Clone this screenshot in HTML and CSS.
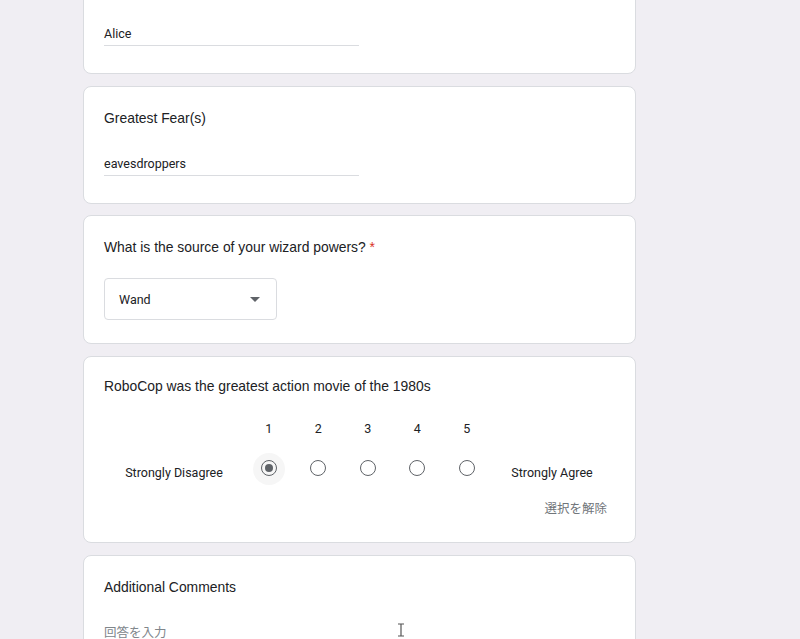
FILE: index.html
```html
<!DOCTYPE html>
<html lang="ja">
<head>
    <meta charset="UTF-8">
    <meta name="viewport" content="width=device-width, initial-scale=1.0">
    <title>Wizard Survey</title>
    <link rel="stylesheet" href="styles.css">
</head>
<body>
    <div class="form">
        <div class="card">
            <div class="question">Name</div>
            <div class="answer">Alice</div>
        </div>

        <div class="card">
            <div class="question">Greatest Fear(s)</div>
            <div class="answer">eavesdroppers</div>
        </div>

        <div class="card card-select">
            <div class="question">What is the source of your wizard powers? <span class="required">*</span></div>
            <div class="dropdown">
                <span>Wand</span>
                <span class="arrow"></span>
            </div>
        </div>

        <div class="card card-scale">
            <div class="question">RoboCop was the greatest action movie of the 1980s</div>
            <div class="scale">
                <div class="scale-num n1">1</div>
                <div class="scale-num n2">2</div>
                <div class="scale-num n3">3</div>
                <div class="scale-num n4">4</div>
                <div class="scale-num n5">5</div>
                <div class="scale-label">Strongly Disagree</div>
                <div class="radio-cell"><span class="radio checked"></span></div>
                <div class="radio-cell"><span class="radio"></span></div>
                <div class="radio-cell"><span class="radio"></span></div>
                <div class="radio-cell"><span class="radio"></span></div>
                <div class="radio-cell"><span class="radio"></span></div>
                <div class="scale-label">Strongly Agree</div>
            </div>
            <div class="clear">選択を解除</div>
        </div>

        <div class="card card-text">
            <div class="question">Additional Comments</div>
            <div class="placeholder">回答を入力</div>
            <svg class="ibeam" width="8" height="14" viewBox="0 0 8 14">
                <path d="M1 1h6M1 13h6M4 1v12" stroke="#555" stroke-width="1.2" fill="none"/>
            </svg>
        </div>
    </div>
</body>
</html>
```

FILE: styles.css
```css
body {
    margin: 0;
    background: #f0eef3;
    font-family: Roboto, "Noto Sans CJK JP", sans-serif;
    color: #202124;
    overflow: hidden;
}
.form {
    width: 553px;
    margin: -44px 0 0 83px;
}
.card {
    position: relative;
    background: #fff;
    border: 1px solid #dadce0;
    border-radius: 8px;
    padding: 21px 20px 27px;
    margin-bottom: 12px;
}
.question {
    font-family: "Liberation Sans", Arial, sans-serif;
    font-size: 13.9px;
    line-height: 20px;
    color: #202124;
}
.required {
    color: #d93025;
}
.answer {
    margin-top: 26px;
    width: 255px;
    font-size: 12.5px;
    line-height: 20px;
    padding-bottom: 1px;
    border-bottom: 1px solid #dadce0;
}
.card-select {
    margin-top: -1px;
    padding-bottom: 23px;
}
.dropdown {
    margin-top: 21px;
    height: 40px;
    border: 1px solid #dadce0;
    border-radius: 4px;
    display: flex;
    align-items: center;
    justify-content: space-between;
    padding: 0 16px 0 14px;
    width: 141px;
    font-size: 12.5px;
}
.arrow {
    width: 0;
    height: 0;
    border-left: 5px solid transparent;
    border-right: 5px solid transparent;
    border-top: 5px solid #5f6368;
}
.card-scale {
    padding-top: 19px;
    padding-bottom: 23px;
}
.scale {
    margin-top: 23px;
    display: grid;
    grid-template-columns: 140px repeat(5, 49.5px) 121px;
    grid-template-rows: 20px 40px;
    row-gap: 9px;
    font-size: 12.5px;
    line-height: 20px;
}
.scale-num {
    text-align: center;
    grid-row: 1;
}
.n1 { grid-column: 2; }
.n2 { grid-column: 3; }
.n3 { grid-column: 4; }
.n4 { grid-column: 5; }
.n5 { grid-column: 6; }
.scale-label {
    grid-row: 2;
    text-align: center;
    padding-top: 15px;
}
.radio-cell {
    grid-row: 2;
    display: flex;
    align-items: center;
    justify-content: center;
}
.radio {
    position: relative;
    width: 14px;
    height: 14px;
    border: 1.6px solid #5f6368;
    border-radius: 50%;
}
.radio.checked::before {
    content: "";
    position: absolute;
    left: -8.5px;
    top: -8.5px;
    width: 32px;
    height: 32px;
    border-radius: 50%;
    background: rgba(95, 99, 104, 0.06);
}
.radio.checked::after {
    content: "";
    position: absolute;
    left: 3px;
    top: 3px;
    width: 8px;
    height: 8px;
    border-radius: 50%;
    background: #5f6368;
}
.clear {
    margin-top: 11px;
    text-align: right;
    padding-right: 8px;
    font-size: 12.5px;
    line-height: 20px;
    color: #70757a;
}
.placeholder {
    margin-top: 26px;
    font-size: 12.5px;
    line-height: 20px;
    color: #80868b;
}
.ibeam {
    position: absolute;
    left: 313px;
    top: 67px;
}
```
